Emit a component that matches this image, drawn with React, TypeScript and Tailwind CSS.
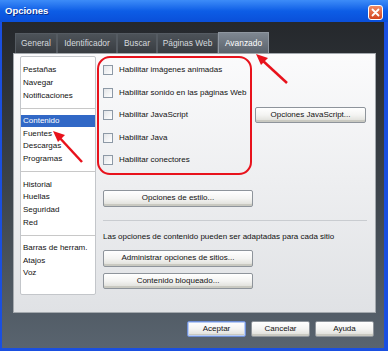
import React from 'react';

const tabs = ['General', 'Identificador', 'Buscar', 'Páginas Web', 'Avanzado'];
const tabWidths = [42, 60, 40, 61, 51];

const groups = [
  ['Pestañas', 'Navegar', 'Notificaciones'],
  ['Contenido', 'Fuentes', 'Descargas', 'Programas'],
  ['Historial', 'Huellas', 'Seguridad', 'Red'],
  ['Barras de herram.', 'Atajos', 'Voz'],
];

const checks = [
  'Habilitar imágenes animadas',
  'Habilitar sonido en las páginas Web',
  'Habilitar JavaScript',
  'Habilitar Java',
  'Habilitar conectores',
];

function XpButton({ label, className = '', primary = false }: { label: string; className?: string; primary?: boolean }) {
  return (
    <div
      className={
        'flex items-center justify-center rounded-[2px] border bg-gradient-to-b from-[#ffffff] via-[#f4f4f2] to-[#dcdcd6] text-[8px] text-[#111] shadow-[inset_0_-2px_0_#c9c9c1] ' +
        (primary ? 'border-[#6f8fd6] shadow-[inset_0_0_0_1px_#b9cdf4,inset_0_-2px_0_#c9c9c1] ' : 'border-[#8e949b] ') +
        className
      }
    >
      {label}
    </div>
  );
}

export default function App() {
  return (
    <div className="relative flex h-[351px] w-[388px] flex-col overflow-hidden bg-[#1a4fe0] font-['Liberation_Sans',Arial,sans-serif]">
      {/* Barra de título */}
      <div className="flex h-[22px] shrink-0 items-center justify-between bg-gradient-to-b from-[#3d8cf8] via-[#0d5de6] to-[#0a4fd9] pl-[5px] pr-[5px]">
        <span className="text-[9.5px] font-bold text-white [text-shadow:1px_1px_0_#0a2d8c]">Opciones</span>
        <div className="mt-[2px] flex h-[15px] w-[15px] items-center justify-center rounded-[3px] border border-white bg-gradient-to-b from-[#f08a64] to-[#d2411c]">
          <svg width="9" height="9" viewBox="0 0 9 9">
            <path d="M1.5 1.5 L7.5 7.5 M7.5 1.5 L1.5 7.5" stroke="white" strokeWidth="1.8" strokeLinecap="round" />
          </svg>
        </div>
      </div>

      {/* Cuerpo */}
      <div className="ml-[2px] mr-[4px] mb-[3px] flex flex-1 flex-col bg-gradient-to-b from-[#25282c] via-[#3c434a] to-[#59646f]">
        {/* Pestañas */}
        <div className="ml-[13px] mt-[10px] flex h-[21px] items-end">
          {tabs.map((t, i) => {
            const active = i === 4;
            return (
              <div
                key={t}
                style={{ width: tabWidths[i] }}
                className={
                  'flex items-center justify-center border-l border-r border-t text-[8.4px] ' +
                  (active
                    ? 'h-[21px] border-[#8e969f] bg-gradient-to-b from-[#7e8791] to-[#5b636c] text-white'
                    : 'h-[20px] border-[#555b62] bg-gradient-to-b from-[#4d5359] to-[#383c41] text-[#d6dade]')
                }
              >
                {t}
              </div>
            );
          })}
        </div>

        {/* Panel */}
        <div className="ml-[11px] flex h-[260px] w-[363px] border border-[#a4a9ae] bg-gradient-to-b from-[#fbfbfc] to-[#e0e2e5] pl-[6px] pt-[2px]">
          {/* Lista */}
          <div className="flex h-[239px] w-[76px] flex-col rounded-[2px] border border-[#c3c6ca] bg-white pt-[7px] text-[8px] text-[#111]">
            {groups.map((g, gi) => (
              <React.Fragment key={gi}>
                {gi > 0 && (
                  <div className="flex h-[12.7px] items-center">
                    <div className="h-px w-full bg-[#c8c8c8]" />
                  </div>
                )}
                {g.map((item) => (
                  <div
                    key={item}
                    className={
                      'flex h-[12.7px] items-center px-[2px] ' +
                      (item === 'Contenido' ? 'bg-[#3168c6] text-white' : '')
                    }
                  >
                    {item}
                  </div>
                ))}
              </React.Fragment>
            ))}
          </div>

          {/* Contenido */}
          <div className="ml-[7px] flex w-[264px] flex-col pt-[3px] text-[8px] text-[#111]">
            {checks.map((c, i) => (
              <div key={c} className="flex h-[22.5px] items-center justify-between">
                <div className="flex items-center gap-[6px]">
                  <div className="h-[10px] w-[10px] border border-[#8d99a6] bg-gradient-to-br from-[#e3e5e8] to-white" />
                  <span>{c}</span>
                </div>
                {i === 2 && <XpButton label="Opciones JavaScript..." className="mr-[1px] h-[16px] w-[111px]" />}
              </div>
            ))}
            <XpButton label="Opciones de estilo..." className="mt-[18px] h-[17px] w-[150px]" />
            <div className="mt-[13px] h-px w-full bg-[#c9ccd0]" />
            <div className="mt-[11px] leading-[10px]">Las opciones de contenido pueden ser adaptadas para cada sitio</div>
            <XpButton label="Administrar opciones de sitios..." className="mt-[8px] h-[17px] w-[150px]" />
            <XpButton label="Contenido bloqueado..." className="mt-[6px] h-[16px] w-[150px]" />
          </div>
        </div>

        {/* Botones */}
        <div className="mr-[10px] mt-[8px] flex justify-end gap-[5px]">
          <XpButton label="Aceptar" primary className="h-[16px] w-[59px]" />
          <XpButton label="Cancelar" className="h-[16px] w-[59px]" />
          <XpButton label="Ayuda" className="h-[16px] w-[59px]" />
        </div>
      </div>

      {/* Anotaciones */}
      <div className="pointer-events-none absolute left-[97px] top-[56px] h-[119px] w-[155px] rounded-[13px] border-[2.5px] border-[#e8121c]" />
      <svg className="pointer-events-none absolute left-0 top-0" width="388" height="351" viewBox="0 0 388 351">
        <line x1="287" y1="83" x2="262" y2="60" stroke="#e8121c" strokeWidth="2.5" />
        <polygon points="256,54 268,58 261,65" fill="#e8121c" />
        <line x1="82" y1="162" x2="58" y2="136" stroke="#e8121c" strokeWidth="2.5" />
        <polygon points="53,131 65,135 58,142" fill="#e8121c" />
      </svg>
    </div>
  );
}
